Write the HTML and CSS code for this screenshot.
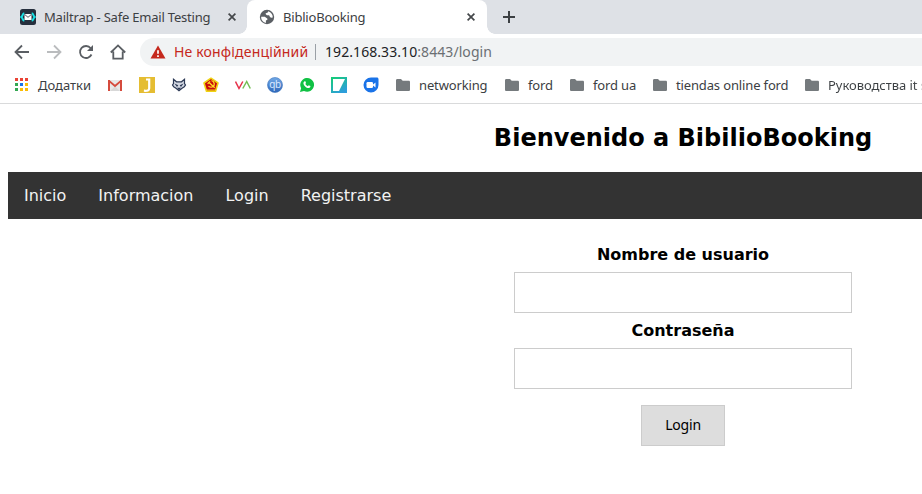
FILE: index.html
```html
<!DOCTYPE html>
<html lang="uk">
<head>
<meta charset="utf-8">
<title>BiblioBooking</title>
<link rel="stylesheet" href="styles.css">
</head>
<body>
<div class="window">
  <div class="tabs">
    <div class="tab tab-idle">
      <svg class="fav" viewBox="0 0 16 16"><rect width="16" height="16" rx="2.500" fill="#262f3d"/><path d="M4.300 4.300C2.300 4.600 3 6.700 1.300 8c1.700 1.300 1 3.400 3 3.700M11.700 4.300c2 .3 1.300 2.400 3 3.700-1.700 1.300-1 3.400-3 3.700" fill="none" stroke="#19e0e3" stroke-width="2"/><rect x="4.500" y="5" width="7" height="6" rx=".5" fill="#fff"/><path d="M4.700 5.500L8 8.300l3.300-2.800" fill="none" stroke="#262f3d" stroke-width=".8"/></svg>
      <span class="tab-title">Mailtrap - Safe Email Testing</span>
      <svg class="close" viewBox="0 0 8 8"><path d="M.6.600l6.800 6.800M7.400.600L.600 7.400"/></svg>
    </div>
    <div class="tab tab-active">
      <svg class="fav" viewBox="0 0 16 16"><circle cx="8" cy="8" r="7.200" fill="#5b5f64"/><path d="M2.200 7.800h3.600l2.400 1.800c.6.500.3 1.100-.3 1.400l-1 .5v2.400c-2.800-.4-5-3-4.700-6.100zM9.300 2.300c-.4 1-.7 1.700-1.800 1.700-1.100.1-1 .8-.5 1.400l1 .8h2.100l.9 1.800c.5.700 1.400.8 2.800.6.100-2.900-1.700-5.400-4.500-6.300z" fill="#fff"/></svg>
      <span class="tab-title">BiblioBooking</span>
      <svg class="close" viewBox="0 0 8 8"><path d="M.6.600l6.800 6.800M7.400.600L.600 7.400"/></svg>
    </div>
    <svg class="plus" viewBox="0 0 12 12"><path d="M6 0v12M0 6h12"/></svg>
  </div>

  <div class="toolbar">
    <svg class="tool" viewBox="0 0 16 16"><path d="M15 8H2M8 1.500L1.500 8 8 14.500"/></svg>
    <svg class="tool tool-off" viewBox="0 0 16 16"><path d="M1 8h13M8 1.500L14.500 8 8 14.500"/></svg>
    <svg class="tool" viewBox="0 0 16 16"><path d="M13.500 10.500A6 6 0 1 1 12.700 4.200"/><path class="solid" d="M15 1v6H9z"/></svg>
    <svg class="tool" viewBox="0 0 16 16"><path d="M.800 8.500L8 1.400l7.200 7.100M3.300 7.400v7.300h9.400V7.400"/></svg>
    <div class="omnibox">
      <svg class="warn" viewBox="0 0 16 14"><path d="M8 .500L15.500 13.500H.500z" fill="#c5281c"/><path d="M8 5.300v3.500M8 10.300v1.700" stroke="#fff" stroke-width="1.700"/></svg>
      <span class="insecure">Не конфіденційний</span>
      <span class="divider"></span>
      <span class="url">192.168.33.10<span class="path">:8443/login</span></span>
    </div>
  </div>

  <div class="bookmarks">
    <div class="apps">
      <svg class="grid" viewBox="0 0 13 13"><path fill="#ea4335" d="M0 0h3v3H0zM5 0h3v3H5zM10 0h3v3h-3z"/><path fill="#34a853" d="M0 5h3v3H0zM0 10h3v3H0z"/><path fill="#1a73e8" d="M5 5h3v3H5z"/><path fill="#fbbc04" d="M10 5h3v3h-3zM5 10h3v3H5zM10 10h3v3h-3z"/></svg>
      <span>Додатки</span>
    </div>
    <div class="sites">
      <svg viewBox="0 0 16 16"><path d="M2 3h12v11H2z" fill="#e8e8e8"/><path d="M3 14l5-4.500 5 4.500z" fill="#d8d8d8"/><path d="M1 3h2v11H1zM13 3h2v11h-2z" fill="#d54b3d"/><path d="M1.700 3.600L8 9l6.300-5.400" fill="none" stroke="#d54b3d" stroke-width="1.900"/></svg>
      <svg viewBox="0 0 16 16"><path d="M0 0h16v16H0z" fill="#e5bd32"/><path d="M7 2.500h3.200v8.700c0 2.200-1.800 2.900-5.300 2.500" fill="none" stroke="#fff" stroke-width="2.200"/></svg>
      <svg viewBox="0 0 16 16"><path d="M2.500 2.200L5.500 4.800h5l3-2.600v4.300l1 1.500-1.200 1.700-2.300 1.500L8 13.700l-3-2.500-2.300-1.500L1.500 8l1-1.500z" fill="#d3d8e3" stroke="#2d3a56" stroke-width="1.200"/><path d="M3.500 6.500l3.800 1.800-1.300 1.700zM12.500 6.500L8.700 8.300l1.300 1.700zM6 10.800h4L8 13.300z" fill="#2d3a56"/></svg>
      <svg viewBox="0 0 16 16"><path d="M8 1.200L15 6l-2.500 8.300h-9L1 6z" fill="#c80c0c" stroke="#efd414" stroke-width="1.600" stroke-linejoin="round"/><path d="M8.500 3.500c3.300 1 3.600 5 1.200 6.300-1.300.8-2.800.3-4.300-.6M4.600 6.800l2.600-2.300M6 5.600l5.700 5.200" fill="none" stroke="#ffdf25" stroke-width="1.300"/><path d="M3.500 13h9" stroke="#efd414"/></svg>
      <svg viewBox="0 0 16 16" fill="none" stroke-width="1.500"><path d="M.500 4.500L4 11.500 7.800 4.500" stroke="#e6304a"/><path d="M7.800 11.500L11.700 4.500l3.600 7" stroke="#73be55"/></svg>
      <svg viewBox="0 0 16 16"><defs><linearGradient id="qb" x2="0" y2="1"><stop stop-color="#72a9e6"/><stop offset="1" stop-color="#2e67b9"/></linearGradient></defs><circle cx="8" cy="8" r="7.500" fill="url(#qb)" stroke="#3b73bd" stroke-width=".6"/><text class="qb" x="8" y="11" text-anchor="middle">qb</text></svg>
      <svg viewBox="0 0 16 16"><path d="M1 15l1.100-3.800A6.900 6.900 0 1 1 5 14z" fill="#10c144"/><path d="M5.300 4.400c.4-.4 1-.3 1.200.2l.5 1.300-.7 1c.5 1 1.400 1.800 2.500 2.300l.9-.9 1.700.8c.2.700-.4 1.900-1.600 2C7.500 11.300 4.600 8.700 4.400 6c0-.7.4-1.300.9-1.600z" fill="#fff"/></svg>
      <svg viewBox="0 0 16 16"><defs><linearGradient id="tile" x2=".6" y2="1"><stop stop-color="#13cf72"/><stop offset="1" stop-color="#2d9edb"/></linearGradient></defs><path d="M0 0h16v16H0z" fill="url(#tile)"/><path d="M2 2h12L8 14H2z" fill="#fff"/></svg>
      <svg viewBox="0 0 16 16"><path d="M8 .500h5.800c1 0 1.700.7 1.700 1.700V8A7.500 7.500 0 1 1 8 .500z" fill="#1a73e8"/><rect x="3.500" y="5" width="6.500" height="6" rx="1.200" fill="#fff"/><path d="M9.500 8l3-2.500v5z" fill="#fff"/></svg>
    </div>
    <div class="folders">
      <div class="folder"><svg viewBox="0 0 14 12"><path id="dir" d="M1.300 0H5l1.700 1.700h6c.7 0 1.300.5 1.300 1.200v7.800c0 .7-.6 1.300-1.300 1.300H1.300C.600 12 0 11.400 0 10.700V1.300C0 .600.600 0 1.300 0z"/></svg><span>networking</span></div>
      <div class="folder"><svg viewBox="0 0 14 12"><use href="#dir"/></svg><span>ford</span></div>
      <div class="folder"><svg viewBox="0 0 14 12"><use href="#dir"/></svg><span>ford ua</span></div>
      <div class="folder"><svg viewBox="0 0 14 12"><use href="#dir"/></svg><span>tiendas online ford</span></div>
      <div class="folder"><svg viewBox="0 0 14 12"><use href="#dir"/></svg><span class="fade">Руководства it s</span></div>
    </div>
  </div>

  <main class="page" lang="es">
    <h1>Bienvenido a BibilioBooking</h1>
    <nav class="menu"><a>Inicio</a><a>Informacion</a><a>Login</a><a>Registrarse</a></nav>
    <form class="login">
      <label for="user">Nombre de usuario</label>
      <input id="user" type="text">
      <label for="pass">Contraseña</label>
      <input id="pass" type="password">
      <button type="button">Login</button>
    </form>
  </main>
</div>
</body>
</html>
```
FILE: styles.css
```css
* { box-sizing: border-box; }
html, body { margin: 0; background: #fff; overflow: hidden; }
svg { display: block; flex: none; }
.window {
  width: 1366px;
  font-family: "Noto Sans", sans-serif;
  font-size: 13px;
  line-height: 18px;
  color: #3c4043;
  white-space: nowrap;
}

.tabs { display: flex; height: 34px; background: #dee1e6; }
.tab { display: flex; align-items: center; height: 34px; }
.tab-idle { width: 247px; padding: 0 11px 0 20px; }
.tab-active {
  position: relative;
  width: 240px;
  padding: 0 12px;
  background: #fff;
  border-radius: 8px 8px 0 0;
}
.tab-active::before, .tab-active::after {
  content: "";
  position: absolute;
  bottom: 0;
  width: 8px;
  height: 8px;
}
.tab-active::before { left: -8px; background: radial-gradient(circle at 0 0, #dee1e6 7.5px, #fff 8px); }
.tab-active::after { right: -8px; background: radial-gradient(circle at 100% 0, #dee1e6 7.5px, #fff 8px); }
.fav { width: 16px; height: 16px; margin-right: 8px; }
.tab-title { flex: 1; letter-spacing: -0.2px; }
.close { width: 8px; height: 8px; fill: none; stroke: #44474a; stroke-width: 1.7; }
.plus { width: 12px; height: 12px; margin: 11px 0 0 16px; fill: none; stroke: #3c4043; stroke-width: 2; }

.toolbar { display: flex; align-items: center; gap: 16px; height: 36px; padding-left: 14px; }
.tool { width: 16px; height: 16px; fill: none; stroke: #5a5e63; stroke-width: 1.8; }
.tool-off { stroke: #babcbe; }
.tool .solid { fill: #5a5e63; stroke: none; }
.omnibox {
  display: flex;
  align-items: center;
  flex: 1;
  height: 28px;
  margin-left: -2px;
  padding-left: 10px;
  background: #f1f3f4;
  border-radius: 14px;
  font-size: 14px;
}
.warn { width: 16px; height: 14px; margin-right: 8px; }
.insecure { width: 141px; color: #c5281c; letter-spacing: 0.17px; }
.divider { width: 1px; height: 16px; background: #9aa0a6; margin-right: 9px; }
.url { color: #202124; letter-spacing: 0.07px; }
.path { color: #6b6f73; }

.bookmarks { display: flex; align-items: center; height: 34px; padding: 0 0 4px 15px; border-bottom: 1px solid #d9dadb; }
.apps { display: flex; align-items: center; width: 92px; gap: 10px; }
.grid { width: 13px; height: 13px; }
.sites { display: flex; gap: 16px; width: 289px; }
.sites svg { width: 16px; height: 16px; }
.qb { font-size: 10px; letter-spacing: -0.3px; fill: #dceaff; }
.folders { display: grid; grid-template-columns: 109px 65px 83px 152px 117px; letter-spacing: -0.14px; }
.folder { display: flex; align-items: center; gap: 9px; min-width: 0; }
.folder svg { width: 14px; height: 12px; fill: #757a7d; }
.fade { letter-spacing: -0.05px; background: linear-gradient(90deg, #3c4043 86px, #3c404350 96px); background-clip: text; color: transparent; }

.page { padding: 0 8px; font-family: "DejaVu Sans", sans-serif; font-size: 16px; line-height: 19px; color: #000; }
h1 { margin: 20px 0; font-size: 24px; line-height: 28px; text-align: center; }
.menu { display: flex; background: #333; color: #f2f2f2; }
.menu a { padding: 14px 16px; }
.login { display: flex; flex-direction: column; align-items: center; padding-top: 26px; }
.login label { font-weight: bold; }
.login input { width: 338px; height: 41px; margin: 8px 0; border: 1px solid #ccc; background: #fff; }
.login button {
  width: 84px;
  height: 41px;
  margin-top: 8px;
  padding: 0 0 3px;
  border: 1px solid #ccc;
  background: #ddd;
  color: #000;
  font: 14px "Noto Sans", sans-serif;
  letter-spacing: -0.2px;
}
```
